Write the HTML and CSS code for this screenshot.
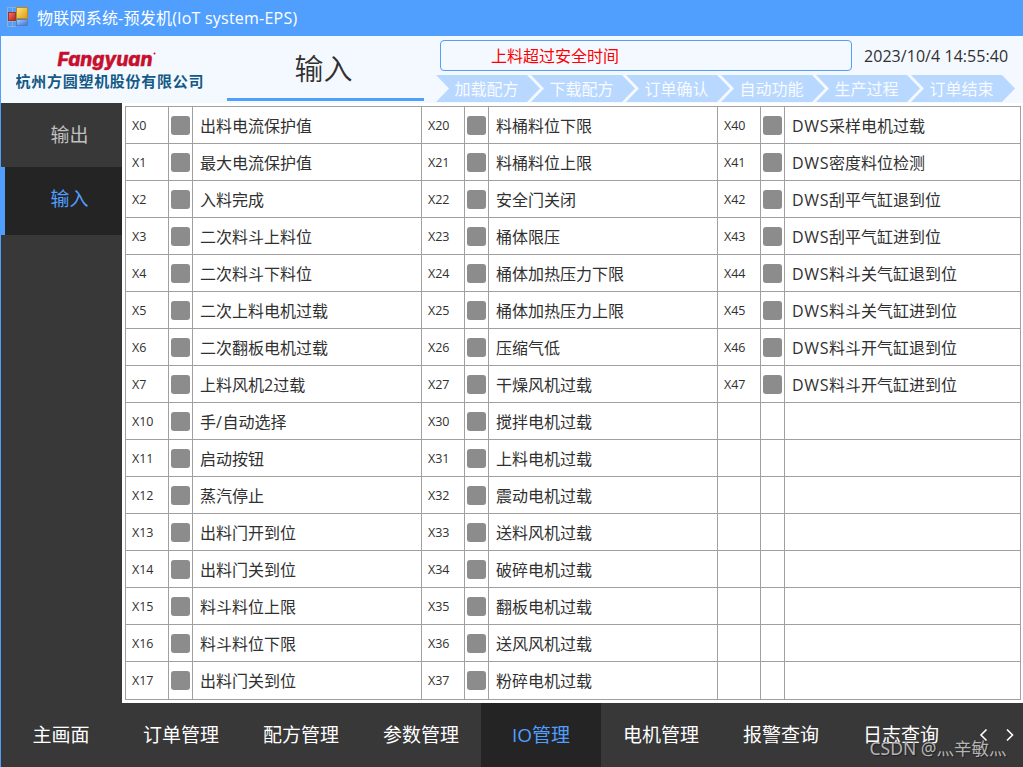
FILE: index.html
```html
<!DOCTYPE html>
<html lang="zh-CN">
<head>
<meta charset="utf-8">
<title>物联网系统-预发机(IoT system-EPS)</title>
<link rel="stylesheet" href="styles.css">
</head>
<body>
<div class="window">
  <div class="titlebar">
    <svg class="app-icon" width="22" height="22" viewBox="0 0 22 22">
      <defs>
        <linearGradient id="gold" x1="0" y1="0" x2="1" y2="1"><stop offset="0" stop-color="#ffe58a"/><stop offset="1" stop-color="#dc9c08"/></linearGradient>
        <linearGradient id="red" x1="0" y1="0" x2="1" y2="1"><stop offset="0" stop-color="#f08070"/><stop offset="1" stop-color="#b81a12"/></linearGradient>
        <linearGradient id="blue" x1="0" y1="0" x2="1" y2="1"><stop offset="0" stop-color="#a8ccff"/><stop offset="1" stop-color="#3970dc"/></linearGradient>
      </defs>
      <path d="M.5 1.500H9M.5 1.500V20.500H9M5.500 1.500V6M5.500 15V20M.5 6.500H2M.5 15.500H9" fill="none" stroke="#8fb0cc"/>
      <rect x="9.500" y="1.500" width="11" height="11" fill="url(#gold)" stroke="#b98a20"/>
      <rect x="1.500" y="6.500" width="7" height="8" fill="url(#red)" stroke="#9c3434"/>
      <rect x="9.500" y="13.500" width="11" height="6" fill="url(#blue)" stroke="#537fc4"/>
    </svg>
    <span class="title-text">物联网系统-预发机(IoT system-EPS)</span>
  </div>
  <header class="header">
    <div class="brand">
      <svg width="190" height="50" viewBox="0 0 190 50">
        <text class="brand-en" x="41.500" y="24" textLength="95" lengthAdjust="spacingAndGlyphs">Fangyuan</text>
        <circle cx="138.500" cy="11.500" r="1" fill="#c8102e"/>
        <text class="brand-cn" x="-0.500" y="44.500" textLength="188">杭州方圆塑机股份有限公司</text>
      </svg>
    </div>
    <h1 class="page-title">输入</h1>
    <div class="status">
      <div class="status-top">
        <div class="alarm">上料超过安全时间</div>
        <div class="clock">2023/10/4 14:55:40</div>
      </div>
      <div class="steps">
        <div class="step">加载配方</div><div class="step">下载配方</div><div class="step">订单确认</div><div class="step">自动功能</div><div class="step">生产过程</div><div class="step">订单结束</div>
      </div>
    </div>
  </header>
  <div class="main">
    <nav class="side">
      <div class="side-item">输出</div>
      <div class="side-item side-active">输入</div>
    </nav>
    <main class="content">
      <div class="io">
        <b>X0</b><i class="on"></i><span>出料电流保护值</span><b>X20</b><i class="on"></i><span>料桶料位下限</span><b>X40</b><i class="on"></i><span><em>DWS</em>采样电机过载</span>
        <b>X1</b><i class="on"></i><span>最大电流保护值</span><b>X21</b><i class="on"></i><span>料桶料位上限</span><b>X41</b><i class="on"></i><span><em>DWS</em>密度料位检测</span>
        <b>X2</b><i class="on"></i><span>入料完成</span><b>X22</b><i class="on"></i><span>安全门关闭</span><b>X42</b><i class="on"></i><span><em>DWS</em>刮平气缸退到位</span>
        <b>X3</b><i class="on"></i><span>二次料斗上料位</span><b>X23</b><i class="on"></i><span>桶体限压</span><b>X43</b><i class="on"></i><span><em>DWS</em>刮平气缸进到位</span>
        <b>X4</b><i class="on"></i><span>二次料斗下料位</span><b>X24</b><i class="on"></i><span>桶体加热压力下限</span><b>X44</b><i class="on"></i><span><em>DWS</em>料斗关气缸退到位</span>
        <b>X5</b><i class="on"></i><span>二次上料电机过载</span><b>X25</b><i class="on"></i><span>桶体加热压力上限</span><b>X45</b><i class="on"></i><span><em>DWS</em>料斗关气缸进到位</span>
        <b>X6</b><i class="on"></i><span>二次翻板电机过载</span><b>X26</b><i class="on"></i><span>压缩气低</span><b>X46</b><i class="on"></i><span><em>DWS</em>料斗开气缸退到位</span>
        <b>X7</b><i class="on"></i><span>上料风机2过载</span><b>X27</b><i class="on"></i><span>干燥风机过载</span><b>X47</b><i class="on"></i><span><em>DWS</em>料斗开气缸进到位</span>
        <b>X10</b><i class="on"></i><span>手<em>/</em>自动选择</span><b>X30</b><i class="on"></i><span>搅拌电机过载</span><b></b><i></i><span></span>
        <b>X11</b><i class="on"></i><span>启动按钮</span><b>X31</b><i class="on"></i><span>上料电机过载</span><b></b><i></i><span></span>
        <b>X12</b><i class="on"></i><span>蒸汽停止</span><b>X32</b><i class="on"></i><span>震动电机过载</span><b></b><i></i><span></span>
        <b>X13</b><i class="on"></i><span>出料门开到位</span><b>X33</b><i class="on"></i><span>送料风机过载</span><b></b><i></i><span></span>
        <b>X14</b><i class="on"></i><span>出料门关到位</span><b>X34</b><i class="on"></i><span>破碎电机过载</span><b></b><i></i><span></span>
        <b>X15</b><i class="on"></i><span>料斗料位上限</span><b>X35</b><i class="on"></i><span>翻板电机过载</span><b></b><i></i><span></span>
        <b>X16</b><i class="on"></i><span>料斗料位下限</span><b>X36</b><i class="on"></i><span>送风风机过载</span><b></b><i></i><span></span>
        <b>X17</b><i class="on"></i><span>出料门关到位</span><b>X37</b><i class="on"></i><span>粉碎电机过载</span><b></b><i></i><span></span>
      </div>
    </main>
  </div>
  <footer class="tabs">
    <div class="tab">主画面</div><div class="tab">订单管理</div><div class="tab">配方管理</div><div class="tab">参数管理</div><div class="tab tab-active">IO管理</div><div class="tab">电机管理</div><div class="tab">报警查询</div><div class="tab">日志查询</div>
    <svg class="arrows" width="36" height="14" viewBox="0 0 36 14" fill="none" stroke="#fff" stroke-width="1.600">
      <path d="M7.500 1.500L2 7L7.500 12.500M28 1.500L33.500 7L28 12.500"/>
    </svg>
    <div class="watermark">CSDN @灬辛敏灬</div>
  </footer>
</div>
</body>
</html>
```
FILE: styles.css
```css
* { box-sizing: border-box; }
body {
  margin: 0;
  font-family: "Open Sans", "Noto Sans CJK SC", sans-serif;
  font-size: 16px;
  color: #303030;
}
.window {
  width: 1023px;
  height: 767px;
  border-left: 1px solid #509fff;
  display: flex;
  flex-direction: column;
  overflow: hidden;
  background: #fff;
}
.titlebar {
  flex: 0 0 36px;
  display: flex;
  align-items: center;
  gap: 8px;
  margin-left: -1px;
  padding-left: 7px;
  background: #509fff;
  color: #fff;
  line-height: 36px;
}
.title-text { letter-spacing: 0.22px; }
.app-icon { margin-top: -3px; }
.header {
  flex: 0 0 67px;
  display: flex;
  background: #f4f9ff;
}
.brand {
  width: 226px;
  padding: 6px 0 0 15px;
}
.brand-en {
  font: italic 800 19px Inter, "Open Sans", sans-serif;
  fill: #c8102e;
  stroke: #c8102e;
  stroke-width: 0.4px;
}
.brand-cn {
  font: bold 15px "Noto Sans CJK SC", sans-serif;
  fill: #155a86;
}
.page-title {
  width: 197px;
  height: 65px;
  margin: 0;
  border-bottom: 3px solid #509fff;
  padding-right: 4px;
  font-size: 29px;
  font-weight: 350;
  line-height: 65px;
  text-align: center;
}
.status {
  flex: 1;
  padding: 4px 0 0 12px;
}
.status-top {
  display: flex;
  height: 31px;
  padding-left: 4px;
}
.alarm {
  width: 412px;
  height: 31px;
  border: 1px solid #509fff;
  border-radius: 4px;
  padding-left: 50px;
  color: #f00;
  line-height: 31px;
}
.clock {
  padding-left: 12px;
  line-height: 32px;
  white-space: nowrap;
  letter-spacing: 0.05px;
}
.steps {
  display: flex;
  padding-top: 4px;
}
.step {
  flex: 0 0 104px;
  height: 27px;
  margin-right: -9px;
  padding-left: 18.5px;
  background: #b8d8ff;
  color: #f8fbff;
  line-height: 28px;
  clip-path: polygon(0 0, 91px 0, 104px 50%, 91px 100%, 0 100%, 13px 50%);
}
.main {
  flex: 0 0 600px;
  display: flex;
}
.side {
  flex: 0 0 121px;
  background: #383838;
  font-size: 19px;
}
.side-item {
  height: 64px;
  padding-left: 49.5px;
  color: #c0c0c0;
  line-height: 65px;
}
.side-active {
  height: 68px;
  border-left: 5px solid #509fff;
  margin-left: -1px;
  padding-left: 45.5px;
  background: #242424;
  color: #509fff;
}
.content {
  flex: 1;
  padding: 3px 2px 3px 3px;
}
.io {
  display: grid;
  grid-template-columns: 43px 24px 229px 43px 24px 229px 43px 24px 236px;
  grid-template-rows: repeat(15, 37px) 38px;
  border-top: 1px solid #a0a0a0;
  border-left: 1px solid #a0a0a0;
}
.io > * {
  border-right: 1px solid #a0a0a0;
  border-bottom: 1px solid #a0a0a0;
}
.io b {
  padding-left: 6px;
  font-size: 12.5px;
  font-weight: 400;
  line-height: 38px;
}
.io span {
  padding-left: 7px;
  line-height: 38px;
  white-space: nowrap;
}
.io em {
  font-style: normal;
  letter-spacing: 0.65px;
}
.io .on::before {
  content: "";
  display: block;
  width: 19px;
  height: 19px;
  margin: 9px 0 0 2px;
  border-radius: 3px;
  background: #8c8c8c;
}
.tabs {
  position: relative;
  flex: 0 0 64px;
  display: flex;
  background: #383838;
  color: #fff;
  font-size: 19px;
  line-height: 65px;
}
.tab {
  flex: 0 0 120px;
  text-align: center;
}
.tab-active {
  background: #242424;
  color: #509fff;
}
.arrows { margin: 25px 0 0 18px; }
.watermark {
  position: absolute;
  left: 868.5px;
  top: 32px;
  color: #b4b4b4;
  font: 17.5px/26px "Noto Sans", "Noto Sans CJK SC", sans-serif;
  text-shadow: 1px 1px 1px #222;
  white-space: nowrap;
}
```
